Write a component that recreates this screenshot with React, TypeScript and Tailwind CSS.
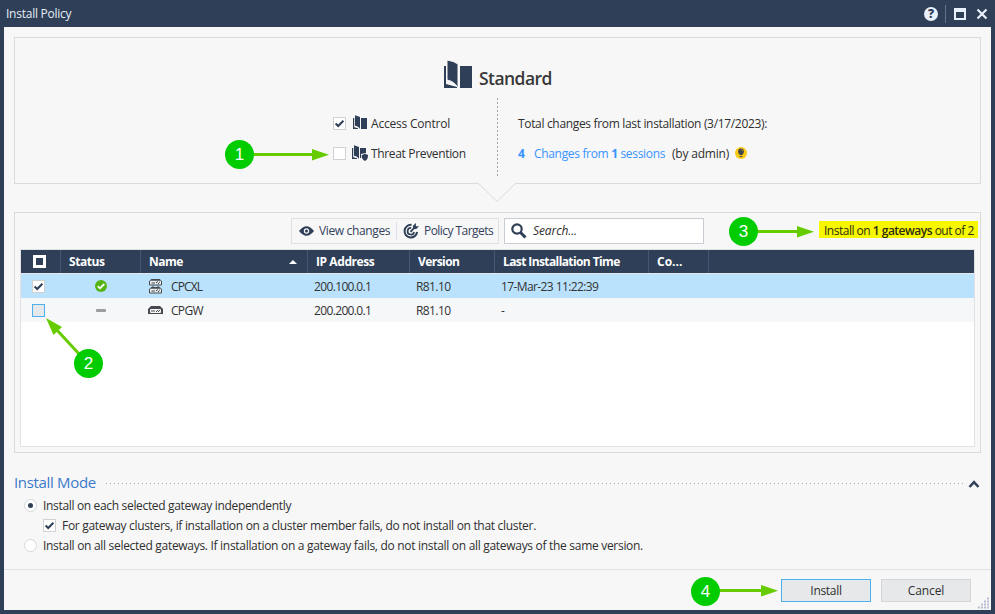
import type { ReactNode } from "react";

const NAVY = "#2e3f57";

function Check({ box = true, on = false, hot = false }: { box?: boolean; on?: boolean; hot?: boolean }) {
  return (
    <span
      className={`flex h-[13px] w-[13px] shrink-0 items-center justify-center ${
        box ? (hot ? "border border-[#4cb0ec] bg-[#e6e9ec]" : "border border-[#cfd1d5] bg-white") : ""
      }`}
    >
      {on && (
        <svg width="11" height="11" viewBox="0 0 11 11" className="shrink-0">
          <path d="M1.6 5.6 4.2 8 9.4 2.8" fill="none" stroke={NAVY} strokeWidth="2" />
        </svg>
      )}
    </span>
  );
}

function Radio({ on = false }: { on?: boolean }) {
  return (
    <span className="flex h-[13px] w-[13px] shrink-0 items-center justify-center rounded-full border border-[#d5d7db] bg-white">
      {on && <span className="h-[5px] w-[5px] rounded-full bg-[#2e3f57]" />}
    </span>
  );
}

function Book({ shield = false }: { shield?: boolean }) {
  return (
    <svg width="16" height="16" viewBox="0 0 16 16" className="shrink-0">
      <path d="M0 3h1.2v9.2L5 13.2V14H0z" fill={NAVY} />
      <path d="M2 .3 7 2v12C6 12 4 11 2 10.7z" fill={NAVY} />
      <path d={shield ? "M8 3h6v5l-5 1v4H8z" : "M8 3h6v11H8z"} fill={NAVY} />
      {shield && <path d="M9.6 10.2 13 8.8l3 1.2c0 3-.7 4.800-3 5.900-2.400-1.100-3.400-2.700-3.400-5.700z" fill={NAVY} />}
    </svg>
  );
}

function HeadCell({ className, children }: { className: string; children?: ReactNode }) {
  return (
    <div className={`flex h-full shrink-0 items-center border-r border-[#475773] text-[12px] font-bold whitespace-nowrap ${className}`}>
      {children}
    </div>
  );
}

function Badge({ n, className }: { n: number; className: string }) {
  return (
    <span
      className={`absolute flex h-[29px] w-[29px] items-center justify-center rounded-full bg-[#00cc00] font-['Liberation_Sans',sans-serif] text-[17px] leading-none text-white ${className}`}
    >
      {n}
    </span>
  );
}

function Title() {
  return (
    <header className="flex h-[27px] shrink-0 items-center pl-[6px] text-[12px] text-[#e6edf6]">
      <span className="tracking-[-0.25px]">Install Policy</span>
      <div className="ml-auto flex items-center pr-[7px]">
        <span className="flex h-[14px] w-[14px] items-center justify-center rounded-full bg-[#e9f1fc] text-[12px] leading-none font-extrabold text-[#2e3f57]">?</span>
        <span className="ml-[7px] h-[18px] w-px bg-[#66748a]" />
        <span className="ml-[8px] h-[12px] w-[12px] border-2 border-t-4 border-[#e9f1fc]" />
        <svg width="12" height="12" viewBox="0 0 12 12" className="ml-[10px]">
          <path d="M1.500 1.500 10.500 10.500M10.500 1.500 1.500 10.500" stroke="#e9f1fc" strokeWidth="2.200" />
        </svg>
      </div>
    </header>
  );
}

function PolicyPanel() {
  return (
    <section className="relative mx-[10px] h-[147px] w-[967px] border border-[#dadbdc]">
      <div className="flex h-[60px] pl-[429px] pt-[22px]">
        <svg width="28" height="29" viewBox="0 0 28 29" className="shrink-0">
          <path d="M0 6h2v18l11 3v1H0z" fill={NAVY} />
          <path d="M3 0Q10 1 14 4v24q-4-7-11-8z" fill={NAVY} stroke="#f7f7f7" />
          <path d="M16 6h12v22H16z" fill={NAVY} />
        </svg>
        <h1 className="ml-[7px] mt-[6px] text-[17.5px] leading-[25px] font-semibold tracking-[-0.55px] text-[#383838]">Standard</h1>
      </div>
      <div className="flex h-[79px]">
        <div className="flex w-[482px] flex-col pl-[318px] pt-[15px]">
          <label className="flex h-[20px] items-center whitespace-nowrap">
            <Check on />
            <span className="ml-[7px] flex w-[18px]"><Book /></span>
            <span className="pt-[2px] tracking-[-0.2px]">Access Control</span>
          </label>
          <label className="mt-[10px] flex h-[20px] items-center whitespace-nowrap">
            <Check />
            <span className="ml-[6px] flex w-[19px]"><Book shield /></span>
            <span className="pt-[2px] tracking-[-0.34px]">Threat Prevention</span>
          </label>
        </div>
        <svg width="1" height="78" className="shrink-0">
          <path d="M.5 0V78" stroke="#9fa3b2" strokeDasharray="2 2" />
        </svg>
        <div className="flex flex-col pl-[20px] pt-[16px]">
          <p className="h-[20px] leading-[20px] whitespace-nowrap tracking-[-0.33px]">Total changes from last installation (3/17/2023):</p>
          <p className="mt-[10px] flex h-[20px] items-center whitespace-nowrap tracking-[-0.33px]">
            <span className="w-[16px] font-bold text-[#3794ff]">4</span>
            <span className="w-[138px] text-[#3794ff]">Changes from <b>1</b> sessions</span>
            <span className="w-[63px] tracking-[-0.2px]">(by admin)</span>
            <svg width="12" height="12" viewBox="0 0 12 12" className="mb-[2px]">
              <circle cx="6" cy="6" r="6" fill="#fdca13" />
              <circle cx="6" cy="4.400" r="2.900" fill="#45454f" />
              <path d="M4.500 6.500h3v1.500h-3zM4.700 9h2.600v1H4.700z" fill="#45454f" />
              <path d="M6.500 2.600 7.700 4" stroke="#fdca13" strokeWidth=".7" />
            </svg>
          </p>
        </div>
      </div>
      <svg width="40" height="20" className="absolute top-[144px] left-[462px]">
        <path d="M1 0H39V2L20.500 19.500 1 2z" fill="#f7f7f7" />
        <path d="M0 1.500H1.500L20 19.500 38.500 1.500H40" fill="none" stroke="#dadbdc" />
      </svg>
    </section>
  );
}

function Toolbar() {
  return (
    <div className="flex h-[36px] pt-[5px]">
      <div className="ml-[276px] flex h-[26px] w-[208px] items-center border border-[#dfe0e4] text-[#34425c]">
        <svg width="15" height="10" viewBox="0 0 15 10" className="ml-[7px] shrink-0">
          <path d="M0 5Q7.500-4.500 15 5 7.500 14.500 0 5z" fill={NAVY} />
          <circle cx="7.500" cy="5" r="2.700" fill="#f7f7f7" />
          <circle cx="7.500" cy="5" r="1.500" fill={NAVY} />
        </svg>
        <span className="ml-[5px] w-[77px] shrink-0 whitespace-nowrap tracking-[-0.36px]">View changes</span>
        <span className="h-[18px] w-px shrink-0 bg-[#dadfe8]" />
        <svg width="16" height="16" viewBox="0 0 16 16" className="ml-[6px] shrink-0">
          <path d="M8.500 1.900A6.300 6.300 0 1 0 14.100 9" fill="none" stroke={NAVY} strokeWidth="2" />
          <path d="M8.200 5A3.300 3.300 0 1 0 11.100 9" fill="none" stroke={NAVY} strokeWidth="1.700" />
          <path d="M7.500 8.800 11 5.200" stroke={NAVY} strokeWidth="1.800" />
          <path d="M10 6V2.800L12.900 0v3.200H16L13.300 6z" fill={NAVY} />
        </svg>
        <span className="ml-[5px] whitespace-nowrap tracking-[-0.55px]">Policy Targets</span>
      </div>
      <div className="ml-[5px] flex h-[26px] w-[200px] items-center border border-[#c9ccd2] bg-white">
        <svg width="16" height="16" viewBox="0 0 16 16" className="ml-[6px]">
          <circle cx="6" cy="6" r="4.700" fill="none" stroke={NAVY} strokeWidth="2.200" />
          <path d="M9.500 9.500 14.500 14.500" stroke={NAVY} strokeWidth="3" />
        </svg>
        <span className="ml-[6px] italic tracking-[-0.1px]">Search...</span>
      </div>
      <div className="mr-[2px] mt-[3px] ml-auto flex h-[17px] w-[159px] items-center bg-[#f7f700] pt-[2px] pl-[5px] whitespace-nowrap tracking-[-0.5px] text-[#2d2d12]">
        <span>Install on <b className="font-semibold">1 gateways</b> out of 2</span>
      </div>
    </div>
  );
}

function Device({ y }: { y: number }) {
  return (
    <g transform={`translate(0 ${y})`}>
      <path d="M2.500.5h8L12.500 2v4h-12V2z" fill="#e8edf0" stroke="#464a50" />
      <path d="M2 1h9" stroke="#464a50" strokeWidth="1.500" />
      <path d="M2.500 4H6M7 3.500h1M9 4.500h1M8 2.800h1M10 3.200h1" stroke="#464a50" />
    </g>
  );
}

function Row({ cluster, name, ip, time }: { cluster?: boolean; name: string; ip: string; time: string }) {
  return (
    <div className={`flex h-[24px] items-center text-[#323232] whitespace-nowrap ${cluster ? "bg-[#bae2fd]" : "bg-[#f5f7f9]"}`}>
      <div className="w-[40px] shrink-0 pl-[11px]"><Check on={cluster} hot={!cluster} /></div>
      <div className="flex w-[80px] shrink-0 justify-center">
        {cluster ? (
          <svg width="12" height="12" viewBox="0 0 12 12">
            <circle cx="6" cy="6" r="6" fill="#55b414" />
            <path d="M2.800 6.200 5 8.300 9.300 4" fill="none" stroke="#fff" strokeWidth="1.800" />
          </svg>
        ) : (
          <span className="h-[3px] w-[10px] rounded-[1px] bg-[#9b9d9f]" />
        )}
      </div>
      <div className="flex w-[173px] shrink-0 items-center">
        {cluster ? (
          <svg width="15" height="15" viewBox="0 0 15 15" className="ml-[8px]">
            <Device y={0} />
            <Device y={8} />
            <path d="M4 6.500v2M9 6.500v2" stroke="#464a50" />
          </svg>
        ) : (
          <svg width="15" height="9" viewBox="0 0 15 9" className="ml-[7px]">
            <path d="M3 0h9l3 3v5H0V3z" fill="#464a50" />
            <rect x="2" y="3" width="11" height="4" rx="1" fill="#f5f7f9" />
            <path d="M3 5h4M8 5.500h1M9 4.500h1M10 5.500h1M11 4.500h1" stroke="#464a50" />
          </svg>
        )}
        <span className={`pt-[2px] ${cluster ? "ml-[7px] tracking-[-0.85px]" : "ml-[8px] tracking-[-0.7px]"}`}>{name}</span>
      </div>
      <div className="w-[102px] shrink-0 pt-[2px] tracking-[-0.64px]">{ip}</div>
      <div className="w-[85px] shrink-0 pt-[2px] tracking-[-0.6px]">R81.10</div>
      <div className="pt-[2px] tracking-[-0.6px]">{time}</div>
    </div>
  );
}

function GatewayPanel() {
  return (
    <section className="mx-[10px] mt-[28px] h-[241px] w-[967px] border border-[#dadbdc]">
      <Toolbar />
      <div className="ml-[5px] h-[198px] w-[955px] border border-[#e0e2e6] bg-white">
        <div className="flex h-[23px] bg-[#2e3f57] text-white">
          <HeadCell className="w-[40px] pl-[12px]">
            <span className="h-[13px] w-[13px] border-[3px] border-white" />
          </HeadCell>
          <HeadCell className="w-[80px] pl-[8px] tracking-[-0.45px]">Status</HeadCell>
          <HeadCell className="w-[167px] justify-between pr-[10px] pl-[8px]">
            <span className="tracking-[-0.5px]">Name</span>
            <svg width="8" height="4" viewBox="0 0 8 4"><path d="M0 4 4 0 8 4z" fill="#fff" /></svg>
          </HeadCell>
          <HeadCell className="w-[102px] pl-[8px] tracking-[-0.42px]">IP Address</HeadCell>
          <HeadCell className="w-[85px] pl-[8px] tracking-[-0.55px]">Version</HeadCell>
          <HeadCell className="w-[154px] pl-[8px] tracking-[-0.6px]">Last Installation Time</HeadCell>
          <HeadCell className="w-[60px] pl-[8px]">Co...</HeadCell>
        </div>
        <div className="h-px bg-[#e4e8ec]" />
        <Row cluster name="CPCXL" ip="200.100.0.1" time="17-Mar-23 11:22:39" />
        <Row name="CPGW" ip="200.200.0.1" time="-" />
      </div>
    </section>
  );
}

function InstallMode() {
  return (
    <section className="mx-[10px] mt-[18px] h-[98px] w-[967px] whitespace-nowrap">
      <div className="flex h-[23px] items-center">
        <h2 className="mb-[2px] w-[91px] text-[15px] leading-[22px] tracking-[-0.33px] text-[#3a7ac8]">Install Mode</h2>
        <svg width="859" height="2" className="mt-[2px] shrink-0">
          <path d="M1 .5H859" stroke="#a3a9b9" strokeDasharray="1 3" />
        </svg>
        <svg width="12" height="8" viewBox="0 0 12 8" className="ml-[4px] mt-[2px] shrink-0">
          <path d="M1.500 7 6 2.200 10.500 7" fill="none" stroke={NAVY} strokeWidth="2.500" />
        </svg>
      </div>
      <label className="mt-[2px] flex h-[20px] items-center gap-[6px] pl-[10px]"><span className="mb-px"><Radio on /></span><span className="tracking-[-0.33px]">Install on each selected gateway independently</span></label>
      <label className="flex h-[20px] items-center gap-[6px] pl-[29px]"><span className="mb-px"><Check on /></span><span className="tracking-[-0.31px]">For gateway clusters, if installation on a cluster member fails, do not install on that cluster.</span></label>
      <label className="flex h-[20px] items-center gap-[6px] pl-[10px]"><span className="mb-px"><Radio /></span><span className="tracking-[-0.3px]">Install on all selected gateways. If installation on a gateway fails, do not install on all gateways of the same version.</span></label>
    </section>
  );
}

function Annotations() {
  return (
    <div className="pointer-events-none absolute inset-0">
      <svg width="995" height="614" className="absolute inset-0">
        <g stroke="#66cc00" strokeWidth="3" fill="#66cc00">
          <path d="M250 154.500H314M755 231.500H799M717 590.500H763" />
          <path d="M80 355 56 329" />
          <path stroke="none" d="M312 149v11.500l17-5.700zM797 226v11.500l17-5.700zM761 585v11.500l17-5.700zM46 318 62 327l-8.500 8z" />
        </g>
      </svg>
      <Badge n={1} className="top-[140px] left-[225px]" />
      <Badge n={2} className="top-[349px] left-[74px]" />
      <Badge n={3} className="top-[217px] left-[729px]" />
      <Badge n={4} className="top-[577px] left-[691px]" />
    </div>
  );
}

export default function App() {
  return (
    <div className="relative flex h-[614px] w-[995px] flex-col overflow-hidden bg-[#2e3f57] font-['Open_Sans','Noto_Sans',sans-serif] text-[12px] leading-[16px] text-[#2f2f2f]">
      <Title />
      <main className="mx-[4px] flex h-[583px] flex-col bg-[#f7f7f7] pt-[10px]">
        <PolicyPanel />
        <GatewayPanel />
        <InstallMode />
        <footer className="relative flex h-[41px] border-t border-[#e0e1e3] pt-[9px] pl-[777px]">
          <button className="h-[23px] w-[90px] border border-[#4cb0ec] bg-[#e6e8ea] tracking-[-0.3px]">Install</button>
          <button className="ml-[10px] h-[23px] w-[90px] border border-[#d3d5d9] bg-[#e6e8ea] tracking-[-0.1px]">Cancel</button>
          <svg width="12" height="12" className="absolute right-[1px] bottom-[1px]">
            <path d="M9 1.500h2M6 4.500h5M3 7.500h8M0 10.500h11" stroke="#b9bed0" strokeWidth="2" strokeDasharray="2 1" />
          </svg>
        </footer>
      </main>
      <Annotations />
    </div>
  );
}
